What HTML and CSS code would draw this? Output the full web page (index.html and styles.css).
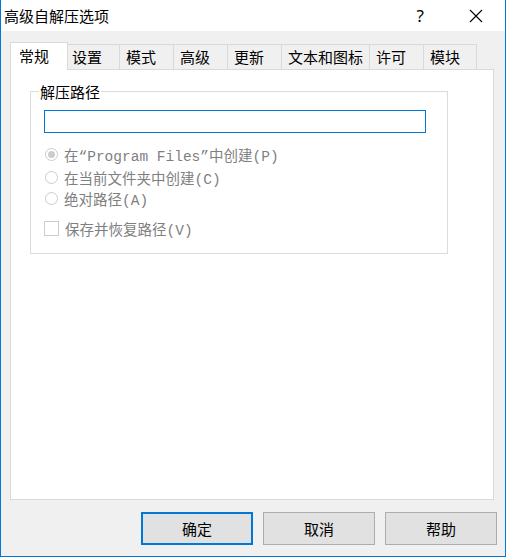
FILE: index.html
```html
<!DOCTYPE html>
<html lang="zh-CN">
<head>
    <meta charset="UTF-8">
    <title>高级自解压选项</title>
    <link rel="stylesheet" href="styles.css">
</head>
<body>
    <div class="window">
        <div class="titlebar">
            <span class="title">高级自解压选项</span>
            <span class="help">?</span>
            <span class="close">
                <svg width="14" height="14" viewBox="0 0 14 14">
                    <path d="M1 1 L13 13 M13 1 L1 13" stroke="#000" stroke-width="1.1" fill="none"/>
                </svg>
            </span>
        </div>
        <div class="content">
            <div class="tabs">
                <div class="tab active">常规</div>
                <div class="tab">设置</div>
                <div class="tab">模式</div>
                <div class="tab">高级</div>
                <div class="tab">更新</div>
                <div class="tab">文本和图标</div>
                <div class="tab">许可</div>
                <div class="tab last">模块</div>
            </div>
            <div class="panel">
                <fieldset class="group">
                    <legend>解压路径</legend>
                    <div class="path-input"></div>
                    <div class="option first">
                        <span class="radio checked"></span>
                        <span>在“Program Files”中创建(P)</span>
                    </div>
                    <div class="option second">
                        <span class="radio"></span>
                        <span>在当前文件夹中创建(C)</span>
                    </div>
                    <div class="option third">
                        <span class="radio"></span>
                        <span>绝对路径(A)</span>
                    </div>
                    <div class="option check-row">
                        <span class="checkbox"></span>
                        <span>保存并恢复路径(V)</span>
                    </div>
                </fieldset>
            </div>
            <div class="buttons">
                <button class="default">确定</button>
                <button>取消</button>
                <button>帮助</button>
            </div>
        </div>
    </div>
</body>
</html>
```

FILE: styles.css
```css
body {
    margin: 0;
    font-family: "Noto Sans CJK SC", "Noto Sans", sans-serif;
    font-size: 15px;
    color: #000;
    background: #fff;
}
.window {
    width: 506px;
    height: 557px;
    box-sizing: border-box;
    border: 1px solid #0078d7;
    border-top: none;
    display: flex;
    flex-direction: column;
}
.titlebar {
    height: 31px;
    background: #fff;
    display: flex;
    align-items: center;
    padding-left: 3px;
}
.title {
    line-height: 20px;
    margin-top: 1px;
}
.help {
    margin-left: auto;
    font-family: "Noto Sans", sans-serif;
    font-size: 17px;
    line-height: 20px;
    margin-top: 1px;
}
.close {
    display: flex;
    margin-left: 45px;
    margin-right: 22px;
    margin-top: 1px;
}
.content {
    flex: 1;
    background: #f0f0f0;
    padding-top: 11px;
}
.tabs {
    display: flex;
    align-items: flex-end;
    padding-left: 9px;
    height: 28px;
    margin-bottom: -1px;
}
.tab {
    box-sizing: border-box;
    min-width: 55px;
    height: 25px;
    margin-bottom: 1px;
    margin-left: -1px;
    padding: 0 6px;
    border: 1px solid #d9d9d9;
    border-bottom: none;
    background: #f0f0f0;
    line-height: 23px;
    white-space: nowrap;
}
.tab.last {
    min-width: 54px;
}
.tab.active {
    position: relative;
    z-index: 2;
    width: 58px;
    height: 28px;
    margin: 0 -2px 0 0;
    padding: 1px 0 0 8px;
    background: #fff;
}
.panel {
    box-sizing: border-box;
    width: 484px;
    height: 431px;
    margin-left: 9px;
    border: 1px solid #d9d9d9;
    background: #fff;
    overflow: hidden;
}
.group {
    box-sizing: border-box;
    width: 418px;
    margin: 13px 0 0 19px;
    padding: 0 0 15px 0;
    border: 1px solid #dcdcdc;
    min-width: 0;
}
.group legend {
    margin-left: 8px;
    padding: 0 1px;
    line-height: 17px;
}
.path-input {
    box-sizing: border-box;
    width: 382px;
    height: 23px;
    margin: 10px 0 0 13px;
    border: 1px solid #0078d7;
}
.option {
    display: flex;
    align-items: center;
    height: 20px;
    font-family: "Liberation Mono", "Noto Sans CJK SC", monospace;
    font-size: 14.5px;
    color: #7f7f7f;
    white-space: nowrap;
}
.option.first { margin-top: 11px; }
.option.second { margin-top: 3px; }
.option.third { margin-top: 1px; }
.option.check-row { margin-top: 10px; }
.radio {
    box-sizing: border-box;
    width: 13px;
    height: 13px;
    margin: 0 6px 0 14px;
    border: 1px solid #cccccc;
    border-radius: 50%;
    background: #fff;
    display: flex;
    align-items: center;
    justify-content: center;
}
.radio.checked::after {
    content: "";
    width: 7px;
    height: 7px;
    border-radius: 50%;
    background: #cccccc;
}
.checkbox {
    box-sizing: border-box;
    width: 15px;
    height: 15px;
    margin: 0 6px 0 13px;
    border: 1px solid #cccccc;
    background: #fff;
}
.buttons {
    display: flex;
    justify-content: flex-end;
    gap: 10px;
    margin-top: 12px;
    padding-right: 8px;
}
button {
    box-sizing: border-box;
    width: 112px;
    height: 33px;
    border: 1px solid #adadad;
    background: #e1e1e1;
    font-family: "Noto Sans CJK SC", sans-serif;
    font-size: 15px;
    color: #000;
    padding: 0;
}
button.default {
    border: 2px solid #0078d7;
}
```
